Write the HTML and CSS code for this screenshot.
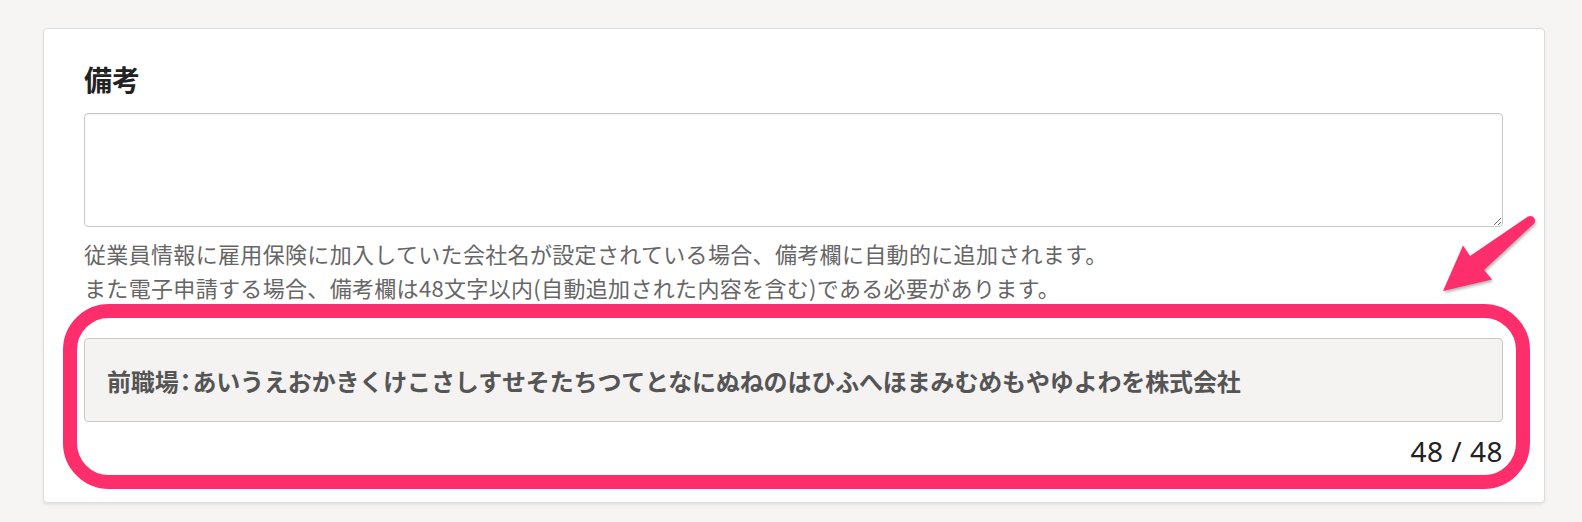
FILE: index.html
```html
<!DOCTYPE html>
<html lang="ja">
<head>
<meta charset="utf-8">
<title>備考</title>
<link rel="stylesheet" href="styles.css">
</head>
<body>
<div class="page">
  <section class="card">
    <h2 class="card-title">備考</h2>
    <textarea class="memo-input"></textarea>
    <p class="help">従業員情報に雇用保険に加入していた会社名が設定されている場合、備考欄に自動的に追加されます。<br>また電子申請する場合、備考欄は48文字以内(自動追加された内容を含む)である必要があります。</p>
    <div class="auto-field highlight">
      <div class="readonly-box">前職場<span class="sep">：</span>あいうえおかきくけこさしすせそたちつてとなにぬねのはひふへほまみむめもやゆよわを株式会社</div>
      <div class="counter">48 / 48</div>
    </div>
  </section>
  <svg class="annot-arrow" viewBox="1430 205 110 95" width="110" height="95" aria-hidden="true">
    <path d="M1528 216.5 Q1532 215 1534.5 218.5 Q1536 222 1533 224.5 L1484 270 L1492 279.5 L1443 291 L1463 245.5 L1470 256 Z" fill="#fe2d6c"/>
  </svg>
</div>
</body>
</html>
```

FILE: styles.css
```css
html, body {
  margin: 0;
  padding: 0;
}

body {
  background: #f6f5f4;
  font-family: "Noto Sans CJK JP", "Noto Sans", sans-serif;
  color: #222;
}

.page {
  position: relative;
  padding: 28px 0 0 43px;
  height: 494px;
}

.card {
  box-sizing: border-box;
  width: 1502px;
  background: #fff;
  border: 1px solid #dcdcdc;
  border-radius: 4px;
  box-shadow: 0 2px 3px rgba(0, 0, 0, 0.07);
  padding: 32px 41px 33px 40px;
}

.card-title {
  margin: 0 0 16px;
  font-size: 28px;
  line-height: 36px;
  font-weight: 700;
  color: #222;
}

.memo-input {
  display: block;
  box-sizing: border-box;
  width: 100%;
  height: 114px;
  margin: 0;
  border: 1px solid #c9c9c9;
  border-radius: 4px;
  background: #fff;
  box-shadow: inset 0 1px 2px rgba(0, 0, 0, 0.06);
  resize: vertical;
  font: inherit;
}

.help {
  margin: 9px 0 34px;
  font-size: 22px;
  line-height: 34px;
  letter-spacing: 0.33px;
  color: #666;
}

.auto-field {
  position: relative;
}

.highlight::before {
  content: "";
  position: absolute;
  top: -34px;
  left: -21px;
  right: -27px;
  bottom: -20px;
  border: 14px solid #fe2d6c;
  border-radius: 46px;
  pointer-events: none;
}

.readonly-box {
  box-sizing: border-box;
  height: 84px;
  display: flex;
  align-items: center;
  padding: 0 22px;
  background: #f4f3f2;
  border: 1px solid #c9c9c9;
  border-radius: 4px;
  font-size: 24px;
  font-weight: 700;
  letter-spacing: -0.15px;
  color: #555;
  white-space: nowrap;
}

.sep {
  font-feature-settings: "halt";
  padding: 0 1px;
}

.counter {
  margin-top: 11px;
  text-align: right;
  font-family: "Noto Sans", sans-serif;
  font-size: 28px;
  line-height: 36px;
  letter-spacing: 0.5px;
  color: #222;
}

.annot-arrow {
  position: absolute;
  left: 1430px;
  top: 205px;
  filter: drop-shadow(1px 2px 1.5px rgba(0, 0, 0, 0.3));
  overflow: visible;
}
```
